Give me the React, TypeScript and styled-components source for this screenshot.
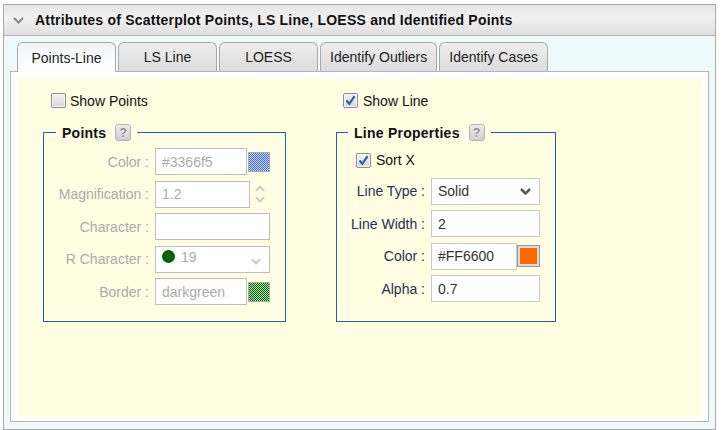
import React from 'react';
import styled, { createGlobalStyle, css } from 'styled-components';

const Global = createGlobalStyle`
  html, body { margin: 0; padding: 0; background: #ffffff; }
  body { font-family: "Liberation Sans", Arial, sans-serif; font-size: 14px; color: #111; }
  *, *::before, *::after { box-sizing: border-box; }
`;

const Frame = styled.div`
  margin: 4px 0 0 3px;
  width: 713px;
  height: 426px;
  border: 1px solid #a9a9a9;
  background: #eef9fa;
  display: flex;
  flex-direction: column;
`;

const Header = styled.div`
  height: 31px;
  flex: none;
  border-bottom: 1px solid #b3b3b3;
  background: linear-gradient(#e6e6e6, #f1f1f1 45%, #dfdfdf);
  display: flex;
  align-items: center;
  gap: 11px;
  padding-left: 9px;
  font-weight: bold;
  font-size: 14px;
  letter-spacing: 0.22px;
  color: #111;
`;

const TabBar = styled.div`
  flex: none;
  margin: 6px 6px 0;
  padding-left: 7px;
  height: 29px;
  display: flex;
  align-items: flex-end;
  gap: 2px;
`;

const Tab = styled.div<{ $active?: boolean }>`
  min-width: 99px;
  padding: 0 9px;
  height: 29px;
  border: 1px solid #aaaaaa;
  border-bottom: none;
  border-radius: 6px 6px 0 0;
  display: flex;
  align-items: center;
  justify-content: center;
  font-size: 14px;
  color: #222;
  background: linear-gradient(#eeeeee, #dcdcdc);
  ${(p) =>
    p.$active &&
    css`
      height: 30px;
      margin-bottom: -1px;
      background: linear-gradient(#eef5f5, #ffffff 85%);
      position: relative;
      z-index: 1;
    `}
`;

const Panel = styled.div`
  flex: 1;
  margin: 0 6px 7px;
  border: 1px solid #b4b4b4;
  background: #ffffff;
  padding: 7px 7px 5px;
  display: flex;
`;

const Content = styled.div`
  flex: 1;
  background: #fffde2;
  padding: 14px 0 0 25px;
  display: grid;
  grid-template-columns: 243px 220px;
  column-gap: 50px;
  row-gap: 16px;
  align-content: start;
`;

const CheckRow = styled.div<{ $indent: number; $gap: number; $height?: number }>`
  display: flex;
  align-items: center;
  gap: ${(p) => p.$gap}px;
  height: ${(p) => p.$height ?? 15}px;
  margin-left: ${(p) => p.$indent}px;
  font-size: 14px;
  color: #111;
`;

const BoxEl = styled.span`
  width: 15px;
  height: 15px;
  flex: none;
  border: 1px solid #8e8e8e;
  border-radius: 2px;
  background: linear-gradient(#f3f3f3, #d6d6d6);
  box-shadow: inset 0 0 0 1px #f8f8f8;
  display: flex;
  align-items: center;
  justify-content: center;
`;

const Group = styled.fieldset<{ $padLeft: number }>`
  margin: 0;
  min-width: 0;
  border: 1px solid #2060a8;
  padding: 7px 14px 16px ${(p) => p.$padLeft}px;
`;

const Legend = styled.legend`
  padding: 0 6px;
  height: 17px;
  display: flex;
  align-items: center;
  gap: 9px;
  font-weight: bold;
  font-size: 14px;
  letter-spacing: 0.25px;
  color: #111;
`;

const Help = styled.span`
  width: 16px;
  height: 17px;
  border: 1px solid #b3b3b3;
  border-radius: 3px;
  background: linear-gradient(#ececec, #cfcfcf);
  color: #8a8a8a;
  font-weight: bold;
  font-size: 12px;
  letter-spacing: 0;
  display: flex;
  align-items: center;
  justify-content: center;
  text-shadow: 0 1px 0 #fff;
`;

const Form = styled.div<{ $label: number; $ctrl: number }>`
  display: grid;
  grid-template-columns: ${(p) => p.$label}px ${(p) => p.$ctrl}px;
  column-gap: 6px;
  row-gap: 5.5px;
  align-items: center;
`;

const FullRow = styled.div`
  grid-column: 1 / -1;
`;

const Label = styled.span<{ $disabled?: boolean }>`
  text-align: right;
  white-space: nowrap;
  font-size: 14px;
  color: ${(p) => (p.$disabled ? '#ababab' : '#23325a')};
`;

const Field = styled.div<{ $w?: number; $disabled?: boolean }>`
  height: 27px;
  width: ${(p) => (p.$w ? `${p.$w}px` : '100%')};
  flex: none;
  border: 1px solid ${(p) => (p.$disabled ? '#bdbdbd' : '#c8c8c8')};
  background: #ffffff;
  padding: 0 6px;
  display: flex;
  align-items: center;
  font-size: 14px;
  color: ${(p) => (p.$disabled ? '#ababab' : '#333333')};
`;

const SelectBox = styled(Field)`
  justify-content: space-between;
  padding-right: 8px;
`;

const SelectValue = styled.span<{ $raised?: boolean }>`
  display: flex;
  align-items: center;
  gap: 6px;
  ${(p) =>
    p.$raised &&
    css`
      margin-top: -5px;
    `}
`;

const Dot = styled.span`
  width: 13px;
  height: 13px;
  border-radius: 50%;
  background: #006400;
`;

const Inline = styled.div<{ $gap?: number }>`
  display: flex;
  align-items: center;
  gap: ${(p) => p.$gap ?? 0}px;
`;

const SwatchBox = styled.span`
  width: 22px;
  height: 20px;
  flex: none;
  margin-left: 1px;
  border: 1px solid #aaaaaa;
  display: block;
  overflow: hidden;
  svg {
    display: block;
  }
`;

const ColorButton = styled.span<{ $color: string }>`
  width: 23px;
  height: 22px;
  flex: none;
  border: 1px solid #9a9a9a;
  box-shadow: inset 0 0 0 2px #dcdcdc;
  background: ${(p) => p.$color};
`;

const Spinner = styled.span`
  display: flex;
  flex-direction: column;
  gap: 4px;
  margin-left: 5px;
`;

const Swatch = ({ id, a, b }: { id: string; a: string; b: string }) => (
  <SwatchBox>
    <svg width={20} height={18} shapeRendering="crispEdges">
      <defs>
        <pattern id={id} width={2} height={2} patternUnits="userSpaceOnUse">
          <rect width={2} height={2} fill={b} />
          <rect width={1} height={1} fill={a} />
          <rect x={1} y={1} width={1} height={1} fill={a} />
        </pattern>
      </defs>
      <rect width={20} height={18} fill={`url(#${id})`} />
    </svg>
  </SwatchBox>
);

const Chevron = ({ color, up, w = 11, sw = 2.2 }: { color: string; up?: boolean; w?: number; sw?: number }) => (
  <svg width={w} height={7} viewBox="0 0 11 7" style={{ display: 'block' }}>
    <polyline
      points={up ? '1,6 5.5,1.5 10,6' : '1,1 5.5,5.5 10,1'}
      fill="none"
      stroke={color}
      strokeWidth={sw}
      strokeLinejoin="miter"
    />
  </svg>
);

const Checkbox = ({ checked }: { checked?: boolean }) => (
  <BoxEl>
    {checked && (
      <svg width={11} height={11} viewBox="0 0 11 11">
        <polyline points="1.5,5.5 4.3,8.8 9.6,1.2" fill="none" stroke="#2d5bb8" strokeWidth={2.2} />
      </svg>
    )}
  </BoxEl>
);

export default function App() {
  return (
    <>
      <Global />
      <Frame>
        <Header>
          <Chevron color="#8a8a8a" />
          <span>Attributes of Scatterplot Points, LS Line, LOESS and Identified Points</span>
        </Header>
        <TabBar>
          <Tab $active>Points-Line</Tab>
          <Tab>LS Line</Tab>
          <Tab>LOESS</Tab>
          <Tab>Identify Outliers</Tab>
          <Tab>Identify Cases</Tab>
        </TabBar>
        <Panel>
          <Content>
            <CheckRow $indent={8} $gap={4}>
              <Checkbox />
              <span>Show Points</span>
            </CheckRow>
            <CheckRow $indent={7} $gap={5}>
              <Checkbox checked />
              <span>Show Line</span>
            </CheckRow>

            <Group $padLeft={12}>
              <Legend>
                <span>Points</span>
                <Help>?</Help>
              </Legend>
              <Form $label={93} $ctrl={115}>
                <Label $disabled>Color :</Label>
                <Inline>
                  <Field $w={92} $disabled>#3366f5</Field>
                  <Swatch id="dither-blue" a="#3366f5" b="#d6defc" />
                </Inline>

                <Label $disabled>Magnification :</Label>
                <Inline>
                  <Field $w={95} $disabled>1.2</Field>
                  <Spinner>
                    <Chevron color="#cccccc" up w={10} />
                    <Chevron color="#cccccc" w={10} />
                  </Spinner>
                </Inline>

                <Label $disabled>Character :</Label>
                <Field $disabled />

                <Label $disabled>R Character :</Label>
                <SelectBox $disabled>
                  <SelectValue $raised>
                    <Dot />
                    <span>19</span>
                  </SelectValue>
                  <span style={{ marginTop: 5 }}>
                    <Chevron color="#c8c8c8" w={10} />
                  </span>
                </SelectBox>

                <Label $disabled>Border :</Label>
                <Inline>
                  <Field $w={92} $disabled>darkgreen</Field>
                  <Swatch id="dither-green" a="#006400" b="#b9dcb9" />
                </Inline>
              </Form>
            </Group>

            <Group $padLeft={11}>
              <Legend>
                <span>Line Properties</span>
                <Help>?</Help>
              </Legend>
              <Form $label={77} $ctrl={109}>
                <FullRow>
                  <CheckRow $indent={8} $gap={5} $height={24}>
                    <Checkbox checked />
                    <span>Sort X</span>
                  </CheckRow>
                </FullRow>

                <Label>Line Type :</Label>
                <SelectBox>
                  <SelectValue>Solid</SelectValue>
                  <Chevron color="#5a5a5a" sw={2.6} />
                </SelectBox>

                <Label>Line Width :</Label>
                <Field>2</Field>

                <Label>Color :</Label>
                <Inline>
                  <Field $w={86}>#FF6600</Field>
                  <ColorButton $color="#ff6600" />
                </Inline>

                <Label>Alpha :</Label>
                <Field>0.7</Field>
              </Form>
            </Group>
          </Content>
        </Panel>
      </Frame>
    </>
  );
}
